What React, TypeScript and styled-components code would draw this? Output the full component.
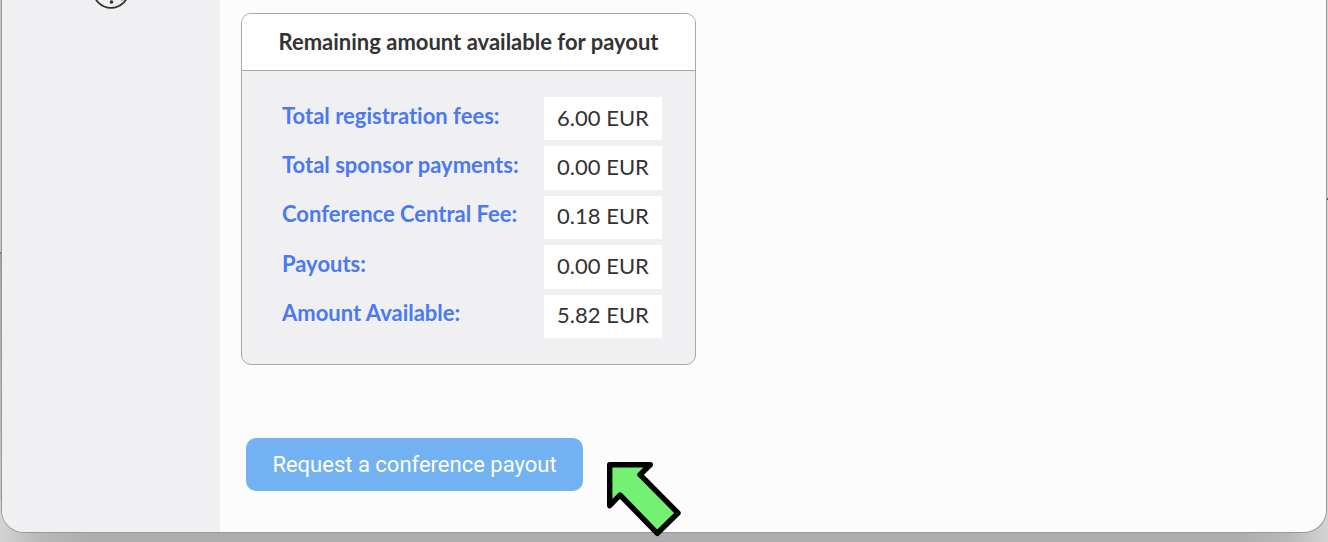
import React from 'react';
import styled, { createGlobalStyle } from 'styled-components';

const GlobalStyle = createGlobalStyle`
  * { box-sizing: border-box; }
  body {
    margin: 0;
    color: #333;
    font-family: Lato, 'Liberation Sans', sans-serif;
    font-size: 22px;
    font-variant-ligatures: none;
    line-height: 28px;
  }
`;

const Desktop = styled.div`
  min-height: 100vh;
  padding: 0 2px 10px;
  background:
    linear-gradient(#555, #555) right 198px / 2px 2px no-repeat,
    linear-gradient(#c4c4c4 252px, #777 252px, #777 254px, #a4a4a4 254px, #c8c8c8) left top / 2px 500px no-repeat,
    linear-gradient(to right, #d4d4d4, #b8b8b8 40px, #aeaeae 90px, #aeaeae calc(100% - 90px), #b8b8b8 calc(100% - 40px), #d4d4d4);
`;

const Window = styled.div`
  display: flex;
  min-height: calc(100vh - 10px);
  background: #fcfcfc;
  border-radius: 0 0 22px 22px;
  box-shadow: 0 0 0 1px #999;
`;

const Sidebar = styled.aside`
  display: flex;
  flex: 0 0 218px;
  align-items: flex-start;
  justify-content: center;
  background: #f0f0f3;
  border-bottom-left-radius: 22px;
`;

const Main = styled.main`
  display: flex;
  flex: 1;
  flex-direction: column;
  align-items: flex-start;
  min-width: 0;
  padding: 13px 21px 41px;
`;

const Card = styled.section`
  width: 100%;
  max-width: 455px;
  overflow: hidden;
  background: #f0f0f3;
  border: 1px solid #a8a8ab;
  border-radius: 10px;
`;

const CardTitle = styled.h2`
  margin: 0;
  padding: 14px 32px;
  background: #fff;
  border-bottom: 1px solid #a8a8ab;
  font-size: 22px;
  font-weight: 700;
  text-align: center;
  white-space: nowrap;
`;

const Amounts = styled.table`
  width: calc(100% - 73px);
  height: 253px;
  margin: 20px 33px 20px 40px;
  border-collapse: separate;
  border-spacing: 0 6px;
`;

const Label = styled.th`
  padding: 0 0 6px;
  color: #4a79f2;
  font-weight: 700;
  text-align: left;
  white-space: nowrap;
`;

const Amount = styled.td`
  width: 118px;
  padding: 0 0 2px;
  background: #fff;
  text-align: center;
`;

const Action = styled.div`
  position: relative;
  margin: 73px 0 0 5px;
`;

const PayoutButton = styled.button`
  display: block;
  min-width: 337px;
  padding: 13px 20px 12px;
  border: 0;
  border-radius: 10px;
  background: #73b2f2;
  color: #fff;
  font: 400 22px/28px Roboto, 'Liberation Sans', sans-serif;
  cursor: pointer;
`;

const Pointer = styled.svg`
  position: absolute;
  top: 22px;
  left: calc(100% + 22px);
  pointer-events: none;
`;

const amounts = [
  ['Total registration fees:', '6.00 EUR'],
  ['Total sponsor payments:', '0.00 EUR'],
  ['Conference Central Fee:', '0.18 EUR'],
  ['Payouts:', '0.00 EUR'],
  ['Amount Available:', '5.82 EUR'],
];

export default function App() {
  return (
    <>
      <GlobalStyle />
      <Desktop>
        <Window>
          <Sidebar>
            <svg width="40" height="10" viewBox="0 30 40 10" aria-hidden="true">
              <circle cx="20" cy="20" r="17.8" fill="none" stroke="#333" strokeWidth="1.8" />
              <circle cx="20.5" cy="32" r="1.8" fill="#333" />
              <path d="M29 29.5l3 1" stroke="#999" strokeWidth="1.2" />
            </svg>
          </Sidebar>
          <Main>
            <Card>
              <CardTitle>Remaining amount available for payout</CardTitle>
              <Amounts>
                <tbody>
                  {amounts.map(([label, amount]) => (
                    <tr key={label}>
                      <Label scope="row">{label}</Label>
                      <Amount>{amount}</Amount>
                    </tr>
                  ))}
                </tbody>
              </Amounts>
            </Card>
            <Action>
              <PayoutButton type="button">Request a conference payout</PayoutButton>
              <Pointer width="78" height="78" viewBox="605 460 78 78" aria-hidden="true">
                <path
                  d="M609.7 464.7H650.3L640 474.7L678 513L657.3 533.3L620 495L609.7 505.7Z"
                  fill="#74f073"
                  stroke="#000"
                  strokeWidth="5.4"
                  strokeLinejoin="round"
                />
              </Pointer>
            </Action>
          </Main>
        </Window>
      </Desktop>
    </>
  );
}
